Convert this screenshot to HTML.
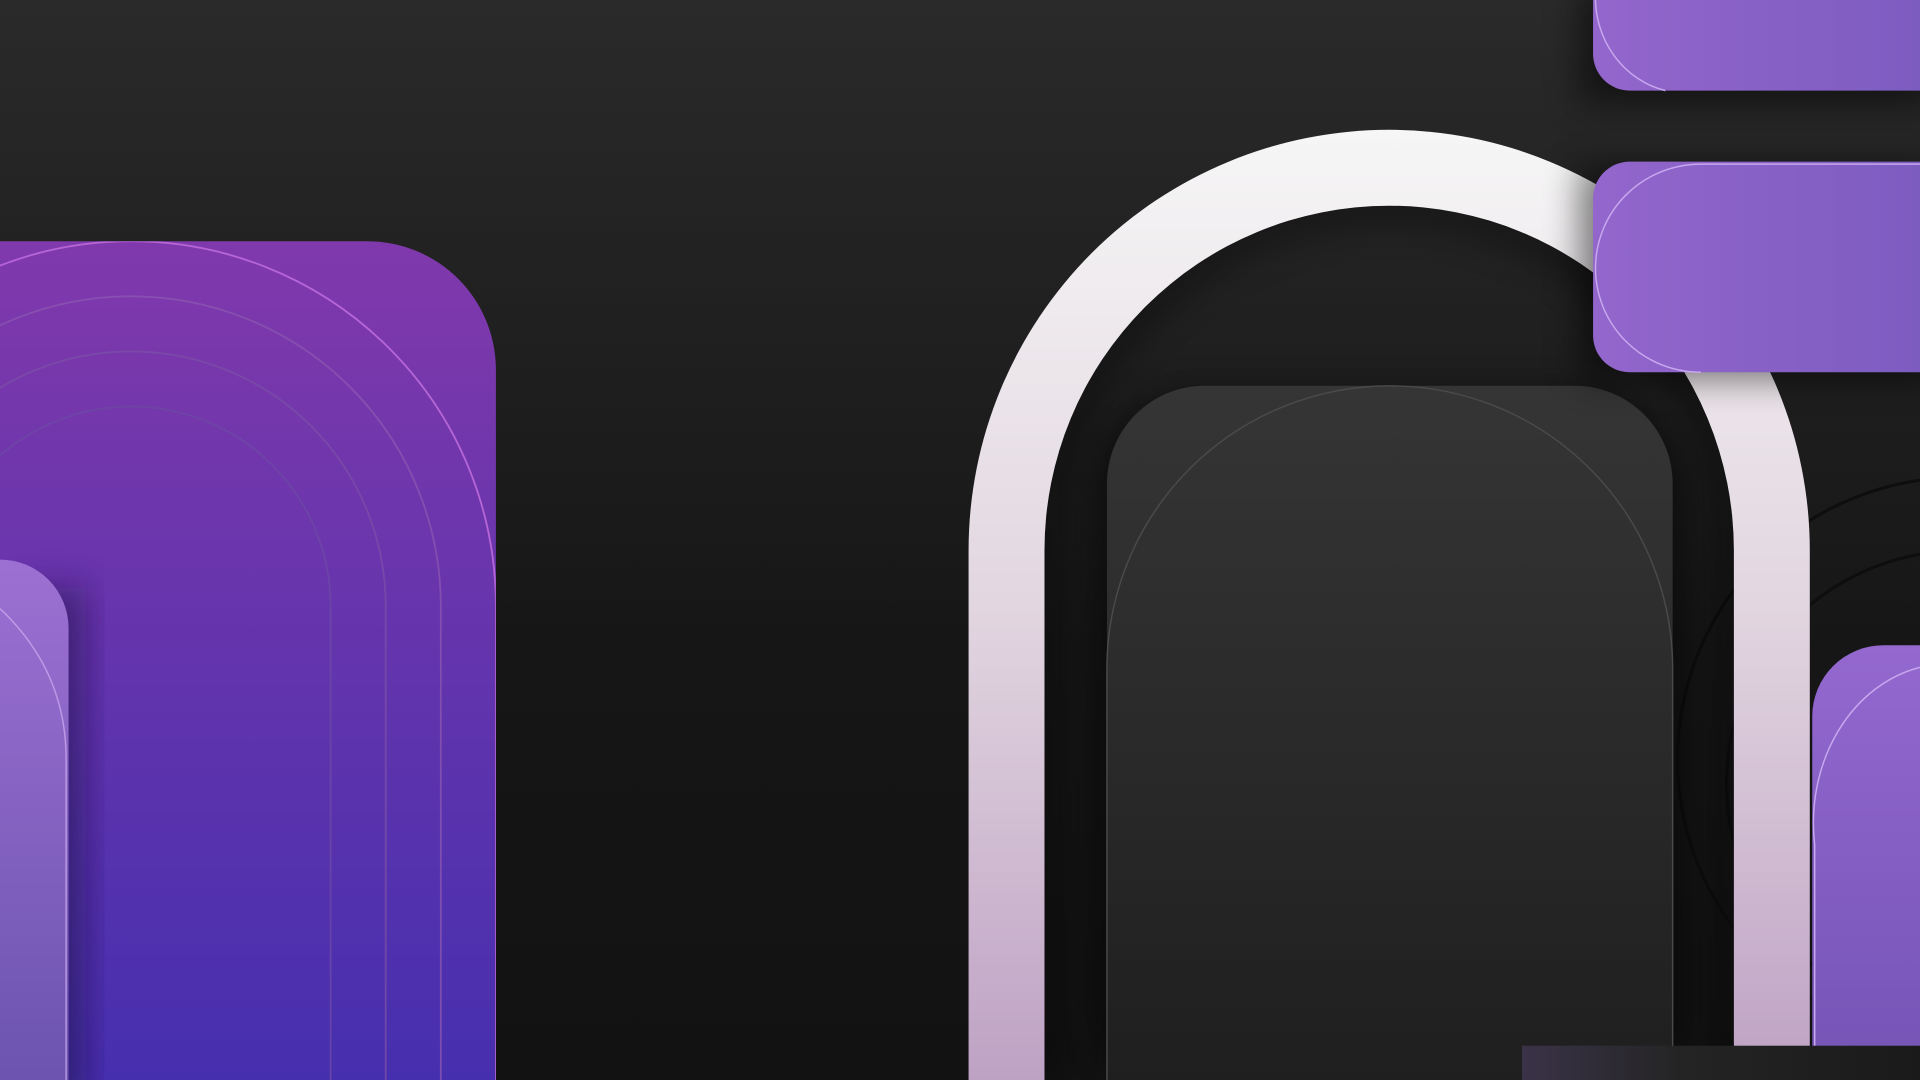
<!DOCTYPE html>
<html><head><meta charset="utf-8"><style>
html,body{margin:0;padding:0;width:1920px;height:1080px;overflow:hidden;background:#1a1a1a}
svg{display:block}
</style></head><body>
<svg width="1920" height="1080" viewBox="0 0 1568 882" preserveAspectRatio="none" xmlns="http://www.w3.org/2000/svg">
<defs>
<linearGradient id="bg" x1="0" y1="0" x2="0" y2="1"><stop offset="0" stop-color="#2a2a2a"/><stop offset="0.6" stop-color="#161616"/><stop offset="1" stop-color="#121212"/></linearGradient>
<linearGradient id="lp" x1="0" y1="0" x2="0" y2="1"><stop offset="0" stop-color="#8039ac"/><stop offset="1" stop-color="#462fae"/></linearGradient>
<linearGradient id="sp" x1="0" y1="0" x2="0" y2="1"><stop offset="0" stop-color="#9c70d2"/><stop offset="1" stop-color="#6c54b0"/></linearGradient>
<linearGradient id="wh" x1="0" y1="0" x2="0" y2="1"><stop offset="0" stop-color="#f6f6f6"/><stop offset="0.5" stop-color="#e2d6e0"/><stop offset="1" stop-color="#bea2c4"/></linearGradient>
<linearGradient id="dk" x1="0" y1="0" x2="0" y2="1"><stop offset="0" stop-color="#353535"/><stop offset="1" stop-color="#1f1f1f"/></linearGradient>
<linearGradient id="bar" x1="0" y1="0" x2="1" y2="0"><stop offset="0" stop-color="#9366cc"/><stop offset="1" stop-color="#7d5cc0"/></linearGradient>
<linearGradient id="rc" x1="0" y1="0" x2="0" y2="1"><stop offset="0" stop-color="#9468cf"/><stop offset="1" stop-color="#7454b6"/></linearGradient>
<linearGradient id="bb" x1="0" y1="0" x2="1" y2="0"><stop offset="0" stop-color="#3a3348"/><stop offset="0.4" stop-color="#242424"/><stop offset="1" stop-color="#1a1a1a"/></linearGradient>
<filter id="sh" x="-30%" y="-30%" width="160%" height="160%"><feGaussianBlur stdDeviation="14"/></filter>
<clipPath id="lc"><path d="M-10 197 H300 A105 105 0 0 1 405 302 V882 H-10 Z"/></clipPath>
</defs>
<rect width="1568" height="882" fill="url(#bg)"/>
<g fill="none" stroke="#0e0e0e" stroke-width="2.5">
<circle cx="1600" cy="620" r="230"/><circle cx="1600" cy="640" r="190"/>
</g>
<path d="M-10 197 H300 A105 105 0 0 1 405 302 V882 H-10 Z" fill="url(#lp)"/>
<g fill="none" stroke-width="1.5" clip-path="url(#lc)">
<path d="M-191 495 A298 298 0 0 1 405 495 V882" stroke="#b565d6"/>
<path d="M-146 495 A253 253 0 0 1 360 495 V882" stroke="#8a55b0" opacity="0.8"/>
<path d="M-101 495 A208 208 0 0 1 315 495 V882" stroke="#7a4ea8" opacity="0.8"/>
<path d="M-56 495 A163 163 0 0 1 270 495 V882" stroke="#6d48a5" opacity="0.8"/>
</g>
<rect x="20" y="480" width="50" height="420" fill="#1a1040" opacity="0.5" filter="url(#sh)"/>
<path d="M-10 457 H0 A56 56 0 0 1 56 513 V882 H-10 Z" fill="url(#sp)"/>
<path d="M0 497 C35 530 54 570 54 620 V882" fill="none" stroke="#c9a6ec" stroke-width="1.2" opacity="0.8"/>
<path d="M853 882 V449.5 A281.5 281.5 0 0 1 1416 449.5 V882" fill="none" stroke="#000" stroke-width="30" opacity="0.35" filter="url(#sh)"/>
<path d="M791 882 V449.5 A343.5 343.5 0 0 1 1478 449.5 V882 H1416 V449.5 A281.5 281.5 0 0 0 853 449.5 V882 Z" fill="url(#wh)"/>
<rect x="895" y="320" width="480" height="580" rx="80" fill="#000" opacity="0.5" filter="url(#sh)"/>
<path d="M904 882 V395 A80 80 0 0 1 984 315 H1286 A80 80 0 0 1 1366 395 V882 Z" fill="url(#dk)"/>
<path d="M904 882 V546 A231 231 0 0 1 1366 546 V882" fill="none" stroke="#4a4a4a" stroke-width="1.2"/>
<rect x="1290" y="-10" width="290" height="95" fill="#000" opacity="0.5" filter="url(#sh)"/>
<path d="M1301 -5 H1568 V74 H1331 A30 30 0 0 1 1301 44 Z" fill="url(#bar)"/>
<path d="M1303 -5 A74 78 0 0 0 1360 74" fill="none" stroke="#c8a8ee" stroke-width="1.2"/>
<rect x="1290" y="135" width="290" height="175" fill="#000" opacity="0.5" filter="url(#sh)"/>
<path d="M1331 132 H1568 V304 H1331 A30 30 0 0 1 1301 274 V162 A30 30 0 0 1 1331 132 Z" fill="url(#bar)"/>
<path d="M1568 134 H1389 A86 85 0 0 0 1389 304" fill="none" stroke="#c8a8ee" stroke-width="1.2"/>
<path d="M1480 882 V585 A58 58 0 0 1 1538 527 H1568 V882 Z" fill="url(#rc)"/>
<path d="M1568 545 A110 130 0 0 0 1482 690 V882" fill="none" stroke="#c8a8ee" stroke-width="1.2"/>
<rect x="1243" y="854" width="325" height="28" fill="url(#bb)"/>
</svg>
</body></html>
